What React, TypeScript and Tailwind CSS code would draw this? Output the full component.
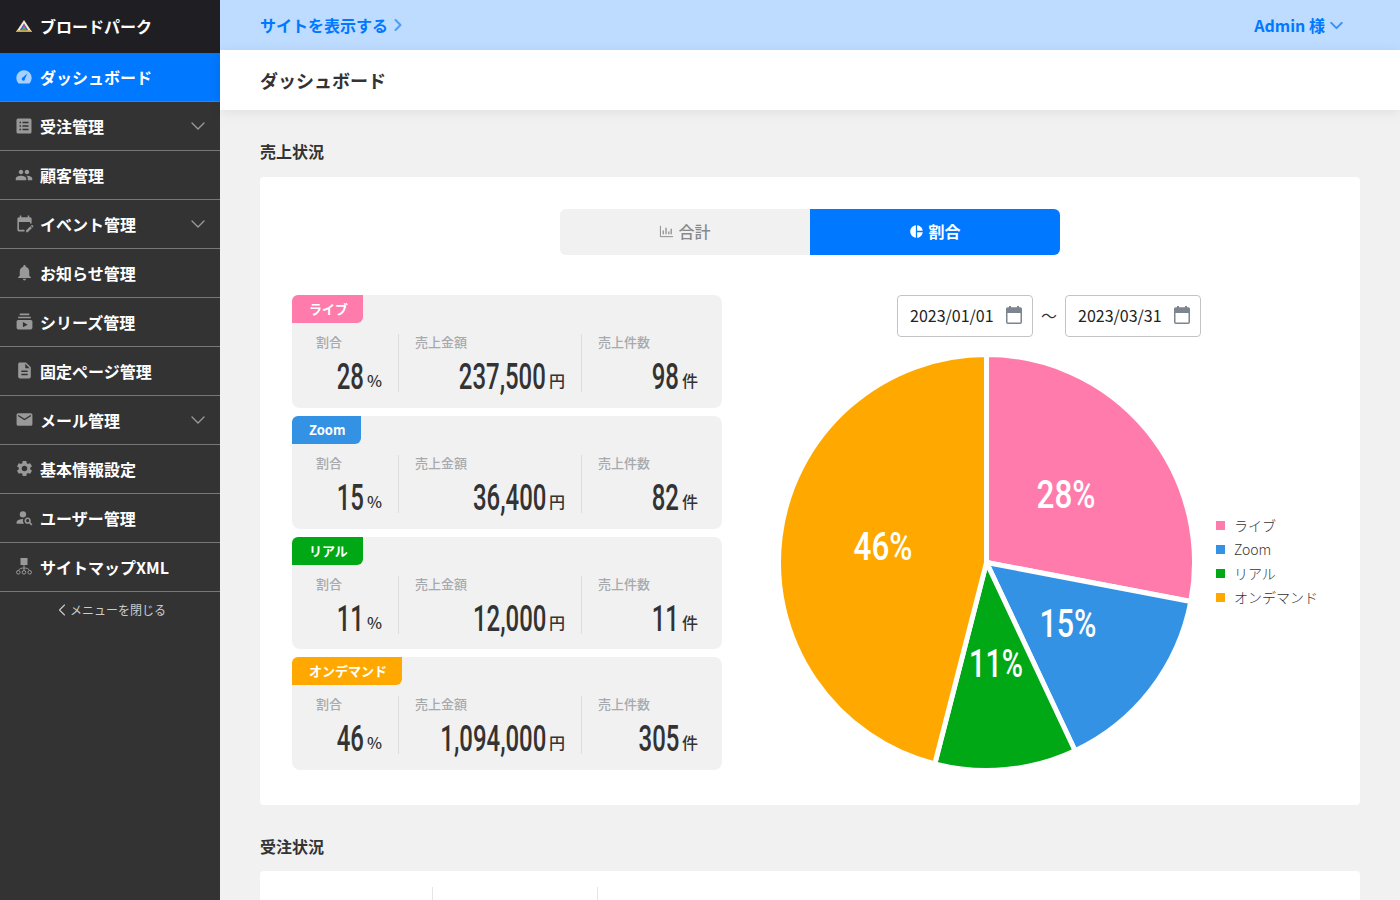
import React from 'react';
import { ChevronDown, ChevronLeft, ChevronRight } from 'lucide-react';
import {
  MdPeople,
  MdEditCalendar,
  MdNotifications,
  MdSubscriptions,
  MdDescription,
  MdEmail,
  MdSettings,
  MdPersonSearch,
  MdPieChart,
} from 'react-icons/md';

const DashIcon = ({ className }: { className?: string }) => (
  <svg viewBox="0 0 16 16" className={className}>
    <path d="M2.6 14.5 A7.7 7.7 0 1 1 13.4 14.5 Z" fill="currentColor" />
    <path d="M11.3 4.4 L8.9 9.9 A1.6 1.6 0 1 1 6.7 8.6 Z" fill="#0078ff" />
  </svg>
);

const ListIcon = ({ className }: { className?: string }) => (
  <svg viewBox="0 0 16 16" className={className}>
    <rect x="0.5" y="0.5" width="15" height="15" rx="1.5" fill="currentColor" />
    <path d="M3.5 4.5 H5 M3.5 8 H5 M3.5 11.5 H5 M6.5 4.5 H12.5 M6.5 8 H12.5 M6.5 11.5 H12.5" stroke="#333333" strokeWidth="1.3" />
  </svg>
);

const TreeIcon = ({ className }: { className?: string }) => (
  <svg viewBox="0 0 16 17" className={className} fill="none" stroke="currentColor">
    <rect x="4.5" y="0" width="7" height="7" fill="currentColor" stroke="none" />
    <path d="M8 7 V12.5 M8 10 C5 10 3.5 10.5 2.5 12.5 M8 10 C11 10 12.5 10.5 13.5 12.5" />
    <circle cx="2.3" cy="14.3" r="1.8" />
    <circle cx="8" cy="14.3" r="1.8" />
    <circle cx="13.7" cy="14.3" r="1.8" />
  </svg>
);

const menu = [
  { label: '受注管理', icon: ListIcon, size: 'h-4 w-4', open: true },
  { label: '顧客管理', icon: MdPeople, size: 'h-[18px] w-[18px]' },
  { label: 'イベント管理', icon: MdEditCalendar, size: 'h-[19px] w-[19px]', open: true },
  { label: 'お知らせ管理', icon: MdNotifications, size: 'h-[19px] w-[19px]' },
  { label: 'シリーズ管理', icon: MdSubscriptions, size: 'h-[19px] w-[19px]' },
  { label: '固定ページ管理', icon: MdDescription, size: 'h-[19px] w-[19px]' },
  { label: 'メール管理', icon: MdEmail, size: 'h-[19px] w-[19px]', open: true },
  { label: '基本情報設定', icon: MdSettings, size: 'h-[19px] w-[19px]' },
  { label: 'ユーザー管理', icon: MdPersonSearch, size: 'h-[19px] w-[19px]' },
  { label: 'サイトマップXML', icon: TreeIcon, size: 'h-[17px] w-4' },
];

const stats = [
  { tag: 'ライブ', tagClass: 'bg-[#ff7bac]', rate: '28', amount: '237,500', count: '98' },
  { tag: 'Zoom', tagClass: 'bg-[#3492e5]', rate: '15', amount: '36,400', count: '82' },
  { tag: 'リアル', tagClass: 'bg-[#00a815]', rate: '11', amount: '12,000', count: '11' },
  { tag: 'オンデマンド', tagClass: 'bg-[#ffa900]', rate: '46', amount: '1,094,000', count: '305' },
];

const slices = [
  { label: 'ライブ', value: 28, color: '#ff7bac', x: 291, y: 143, w: 59 },
  { label: 'Zoom', value: 15, color: '#3492e5', x: 293, y: 272, w: 57 },
  { label: 'リアル', value: 11, color: '#00a815', x: 221, y: 312, w: 54 },
  { label: 'オンデマンド', value: 46, color: '#ffa900', x: 108, y: 195, w: 59 },
];

const Sidebar = () => (
  <aside className="w-[220px] shrink-0 bg-[#333333] text-white">
    <div className="flex h-[53px] items-center gap-2 bg-[#1f1f23] pb-[2px] pl-4 text-base font-bold">
      <svg viewBox="0 0 16 12" className="h-[12px] w-4">
        <path d="M8 0 L16 12 L0 12 Z" fill="#f3ead8" />
        <path d="M8 3.5 L12.5 10.5 L3.5 10.5 Z" fill="#3f62c9" />
        <path d="M8 3.5 L10.5 10.5 L6.5 10.5 Z" fill="#e0407f" />
        <path d="M7 7 L9 7 L10 10.5 L6 10.5 Z" fill="#2fb36a" />
        <path d="M0.7 10.5 H15.3 L16 12 H0 Z" fill="#e8a200" />
      </svg>
      ブロードパーク
    </div>
    <div className="flex h-[49px] items-center gap-2 border-b border-[#777777] bg-[#0078ff] pb-[1px] pl-4 text-base font-bold">
      <DashIcon className="h-4 w-4 text-[#a8d0ff]" />
      ダッシュボード
    </div>
    {menu.map((item) => {
      const Icon = item.icon;
      return (
        <div
          key={item.label}
          className="flex h-[49px] items-center border-b border-[#777777] pb-[1px] pl-4 pr-[10px] text-base font-bold"
        >
          <span className="mr-2 flex w-4 justify-center text-[#999999]">
            <Icon className={`shrink-0 ${item.size}`} />
          </span>
          <span className="flex-1">{item.label}</span>
          {item.open && <ChevronDown className="h-6 w-6 text-[#999999]" strokeWidth={1.4} />}
        </div>
      );
    })}
    <div className="flex h-[37px] items-center justify-center pb-[2px] pr-[2px] text-xs text-[#cccccc]">
      <ChevronLeft className="-mr-[2px] h-5 w-5" strokeWidth={1.3} />
      メニューを閉じる
    </div>
  </aside>
);

const Stat = ({ label, value, unit, className }: { label: string; value: string; unit: string; className: string }) => (
  <div className={className}>
    <p className="text-[13px] font-medium leading-4 text-[#a6a9ad]">{label}</p>
    <p className="mt-[8px] flex items-baseline justify-end gap-[3px] leading-[36px]">
      <span className="origin-right translate-y-px scale-x-[0.665] font-['Roboto'] text-[36px] font-medium text-[#333333]">{value}</span>
      <span className="-translate-y-px text-base font-medium text-[#333333]">{unit}</span>
    </p>
  </div>
);

const StatCard = ({ item }: { item: (typeof stats)[number] }) => (
  <div className="h-[112.75px] rounded-lg bg-[#f1f1f1]">
    <div className={`inline-block h-[28px] rounded-tl-md rounded-br-md pl-[17px] pr-[15px] text-[13px] font-bold leading-[28px] text-white ${item.tagClass}`}>
      {item.tag}
    </div>
    <div className="mt-[11px] flex h-[58px]">
      <Stat label="割合" value={item.rate} unit="%" className="w-[107px] border-r border-[#dddddd] pl-6 pr-4" />
      <Stat label="売上金額" value={item.amount} unit="円" className="w-[183px] border-r border-[#dddddd] pl-4 pr-4" />
      <Stat label="売上件数" value={item.count} unit="件" className="flex-1 pl-4 pr-6" />
    </div>
  </div>
);

const CalendarIcon = () => (
  <svg viewBox="0 0 16 18" className="h-[18px] w-4 shrink-0 text-[#7d8690]">
    <path d="M0 3 a1 1 0 0 1 1-1 h14 a1 1 0 0 1 1 1 v4 H0 Z" fill="currentColor" />
    <rect x="0.75" y="2" width="14.5" height="15.25" rx="1" fill="none" stroke="currentColor" strokeWidth="1.5" />
    <rect x="3" y="0" width="2" height="3" fill="currentColor" />
    <rect x="11" y="0" width="2" height="3" fill="currentColor" />
  </svg>
);

const DateBox = ({ value }: { value: string }) => (
  <div className="flex h-[42px] w-[136px] items-center justify-between rounded border border-[#c4c4c4] pb-[2px] pl-3 pr-[10px] text-base text-[#222222]">
    {value}
    <CalendarIcon />
  </div>
);

const Pie = () => {
  const cx = 211.5;
  const cy = 211.5;
  const r = 208;
  let start = 0;
  return (
    <svg viewBox="0 0 423 423" className="h-[423px] w-[423px] shrink-0">
      {slices.map((s) => {
        const end = start + (s.value / 100) * Math.PI * 2;
        const x1 = cx + r * Math.sin(start);
        const y1 = cy - r * Math.cos(start);
        const x2 = cx + r * Math.sin(end);
        const y2 = cy - r * Math.cos(end);
        start = end;
        return (
          <path
            key={s.label}
            d={`M${cx} ${cy} L${x1} ${y1} A${r} ${r} 0 0 1 ${x2} ${y2} Z`}
            fill={s.color}
            stroke="#ffffff"
            strokeWidth={5}
          />
        );
      })}
      {slices.map((s) => (
        <text
          key={s.label}
          x={s.x - s.w / 2}
          y={s.y + 14}
          textLength={s.w}
          lengthAdjust="spacingAndGlyphs"
          fill="#ffffff"
          fontSize={39}
          fontWeight={500}
          fontFamily="Roboto, sans-serif"
        >
          {s.value}%
        </text>
      ))}
    </svg>
  );
};

export default function App() {
  return (
    <div className="flex h-screen overflow-hidden bg-[#f1f1f1] font-['Noto_Sans_CJK_JP','Noto_Sans',sans-serif] text-[#333333]">
      <Sidebar />
      <main className="min-w-0 flex-1">
        <div className="flex h-[50px] items-center justify-between bg-[#bddcff] pl-10 pr-[53px] text-base font-bold text-[#0078ff]">
          <span className="flex items-center">
            サイトを表示する
            <ChevronRight className="h-5 w-5 text-[#4d9cf5]" strokeWidth={2.4} />
          </span>
          <span className="flex items-center gap-[1px]">
            Admin 様
            <ChevronDown className="h-[21px] w-[21px] text-[#3a92f7]" strokeWidth={2.4} />
          </span>
        </div>
        <div className="flex h-[60px] items-center bg-white pl-10 text-lg font-bold shadow-[0_2px_12px_rgba(0,0,0,0.08)]">
          ダッシュボード
        </div>

        <section className="px-10">
          <h2 className="mt-[29px] text-base font-bold leading-6">売上状況</h2>
          <div className="mt-[14px] h-[628px] rounded bg-white p-8">
            <div className="mx-auto flex h-[46px] w-[500px] overflow-hidden rounded-md text-base font-medium">
              <div className="flex flex-1 items-center justify-center gap-1 bg-[#f1f1f1] pb-[2px] text-[#888888]">
                <svg viewBox="0 0 16 16" className="h-[15px] w-[15px]" fill="none" stroke="currentColor">
                  <path d="M1.5 2 V13.5 H15" />
                  <path d="M4.5 11 V7 M7.5 11 V4 M10.5 11 V8 M13 11 V5" strokeWidth="1.3" />
                </svg>
                合計
              </div>
              <div className="flex flex-1 items-center justify-center gap-1 bg-[#0078ff] pb-[2px] font-bold text-white">
                <MdPieChart className="h-[15px] w-[15px]" />
                割合
              </div>
            </div>

            <div className="mt-10 flex">
              <div className="flex w-[430px] shrink-0 flex-col gap-2">
                {stats.map((item) => (
                  <StatCard key={item.tag} item={item} />
                ))}
              </div>
              <div className="min-w-0 flex-1">
                <div className="ml-[175px] flex items-center">
                  <DateBox value="2023/01/01" />
                  <span className="w-8 pb-[2px] text-center text-base">〜</span>
                  <DateBox value="2023/03/31" />
                </div>
                <div className="ml-[53px] mt-[14px] flex items-center">
                  <Pie />
                  <ul className="mb-[2px] ml-[18px] flex flex-col gap-[3.5px] text-sm font-light leading-[20.5px]">
                    {slices.map((s) => (
                      <li key={s.label} className="flex items-center gap-[9px] whitespace-nowrap">
                        <svg viewBox="0 0 9 9" className="h-[9px] w-[9px]">
                          <rect width="9" height="9" fill={s.color} />
                        </svg>
                        {s.label}
                      </li>
                    ))}
                  </ul>
                </div>
              </div>
            </div>
          </div>

          <h2 className="mt-[29px] text-base font-bold leading-6">受注状況</h2>
          <div className="mt-[13px] h-[200px] rounded bg-white pt-4">
            <div className="flex h-10">
              <div className="w-[173px] border-r border-[#e5e5e5]" />
              <div className="w-[165px] border-r border-[#e5e5e5]" />
            </div>
          </div>
        </section>
      </main>
    </div>
  );
}
